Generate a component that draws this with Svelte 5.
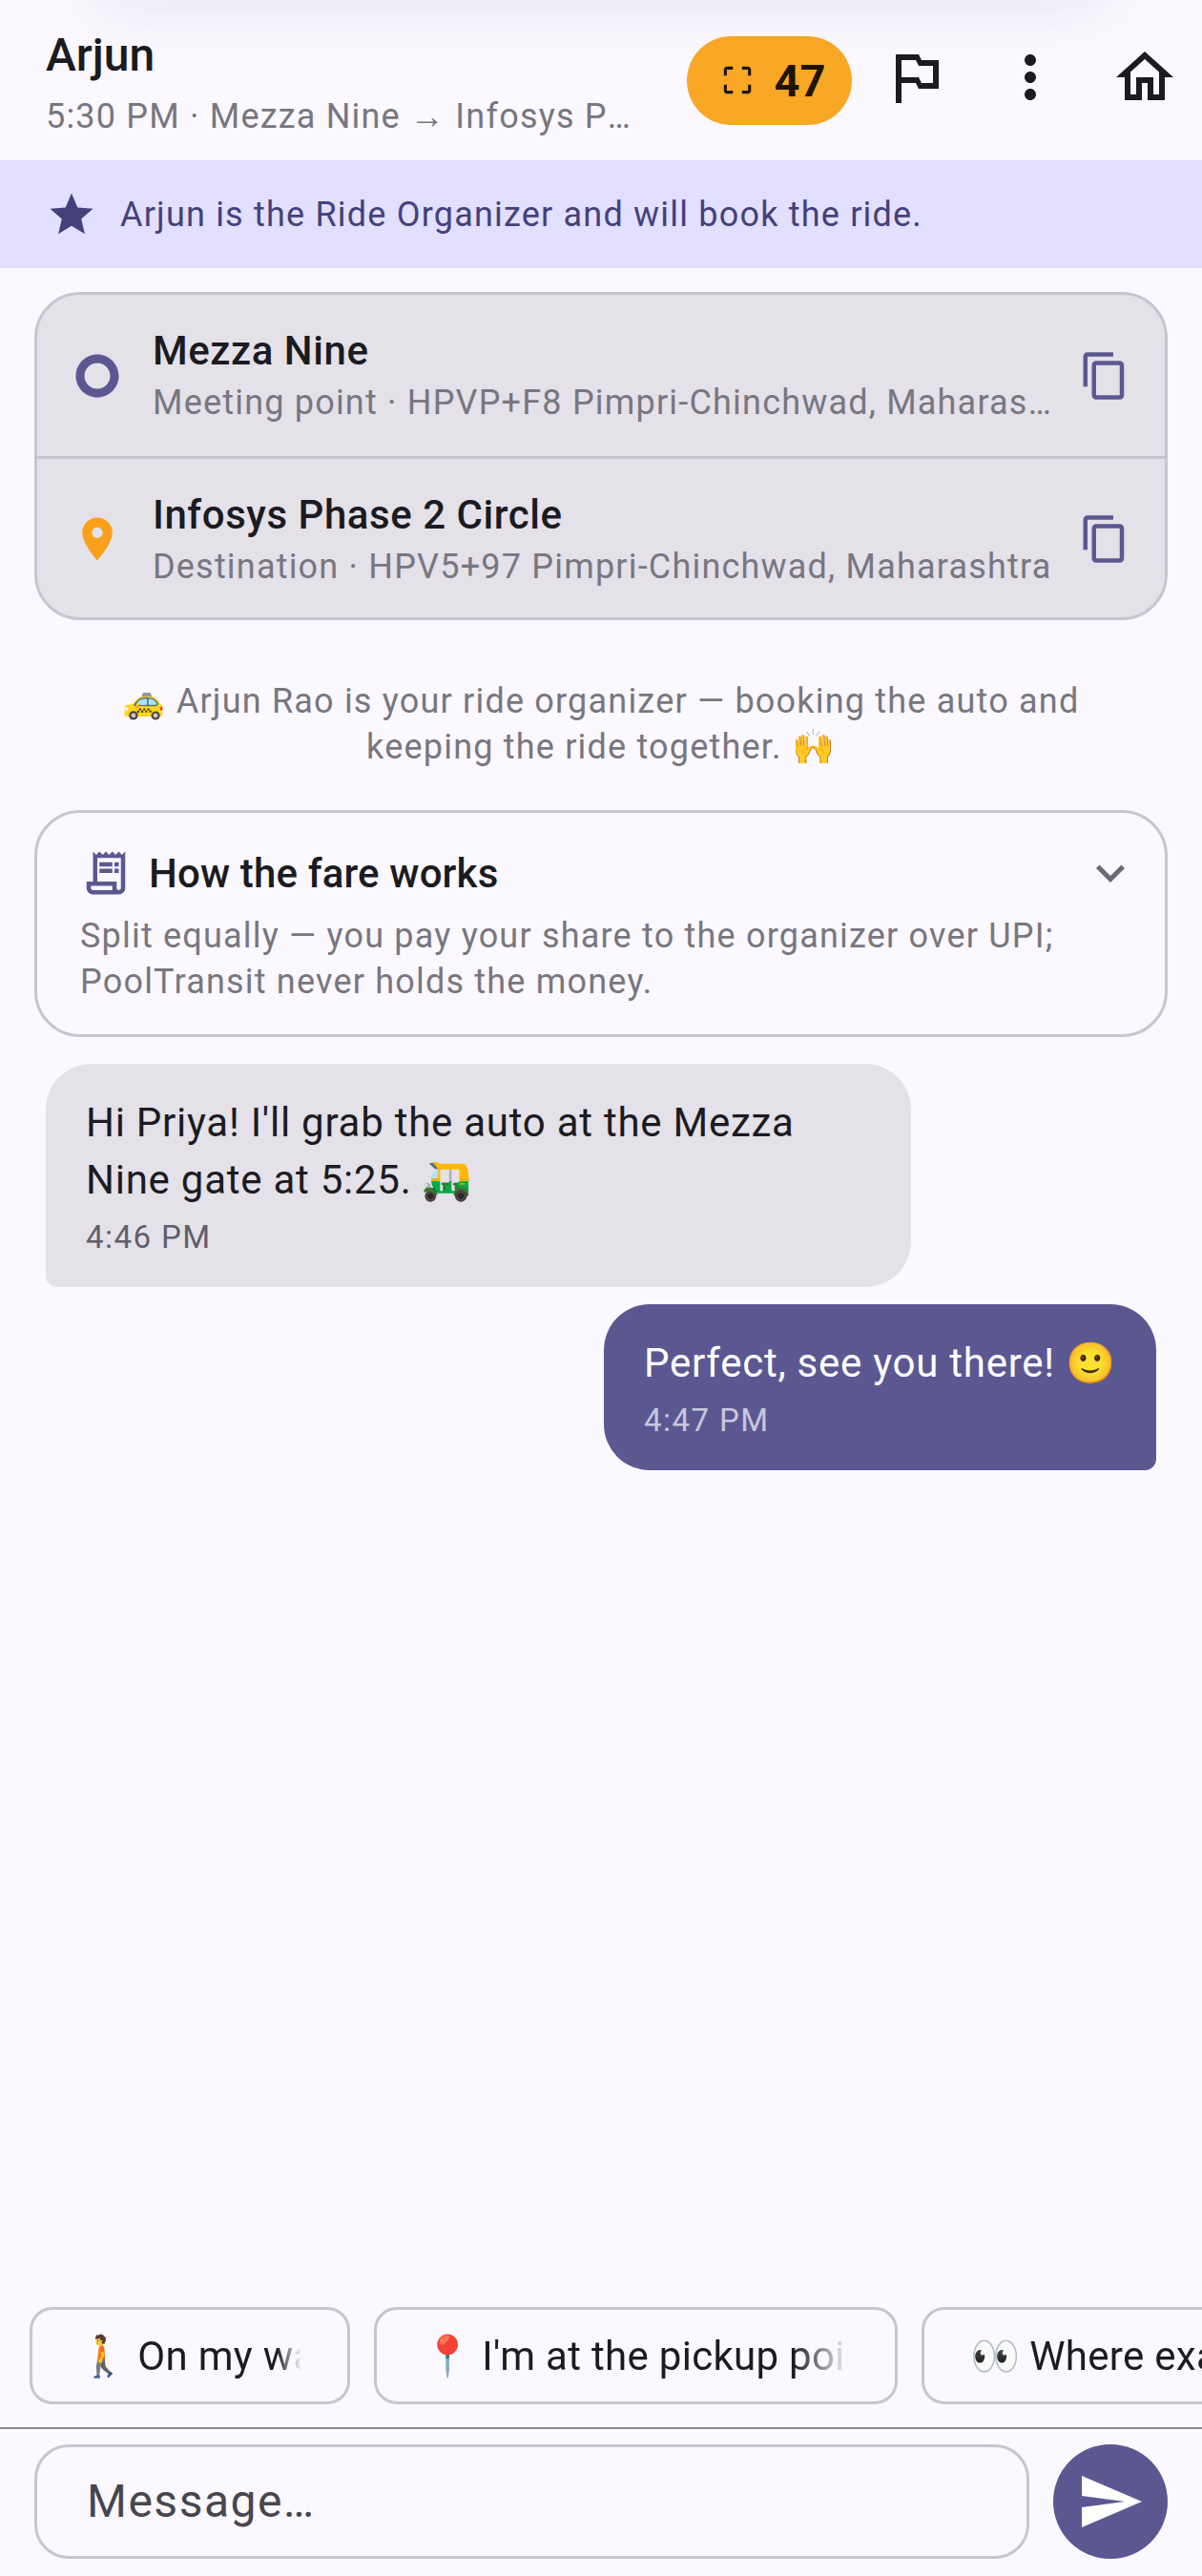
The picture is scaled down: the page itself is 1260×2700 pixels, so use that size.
<script>
	const icons = {
		crop: "M3 5v4h2V5h4V3H5c-1.1 0-2 .9-2 2zm2 10H3v4c0 1.1.9 2 2 2h4v-2H5v-4zm14 4h-4v2h4c1.1 0 2-.9 2-2v-4h-2v4zm0-16h-4v2h4v4h2V5c0-1.1-.9-2-2-2z",
		flag: "M14 6l-1-2H5v17h2v-7h5l1 2h7V6h-6zm4 8h-4l-1-2H7V6h5l1 2h5v6z",
		more: "M12 8c1.1 0 2-.9 2-2s-.9-2-2-2-2 .9-2 2 .9 2 2 2zm0 2c-1.1 0-2 .9-2 2s.9 2 2 2 2-.9 2-2-.9-2-2-2zm0 6c-1.1 0-2 .9-2 2s.9 2 2 2 2-.9 2-2-.9-2-2-2z",
		home: "M12 5.69l5 4.5V18h-2v-6H9v6H7v-7.81l5-4.5M12 3L2 12h3v8h6v-6h2v6h6v-8h3L12 3z",
		star: "M12 17.27L18.18 21l-1.64-7.03L22 9.24l-7.19-.61L12 2 9.19 8.63 2 9.24l5.46 4.73L5.82 21z",
		pin: "M12 2C8.13 2 5 5.13 5 9c0 5.25 7 13 7 13s7-7.75 7-13c0-3.87-3.13-7-7-7zm0 9.5c-1.38 0-2.5-1.12-2.5-2.5s1.12-2.5 2.5-2.5 2.5 1.12 2.5 2.5-1.12 2.5-2.5 2.5z",
		ring: "M12 2C6.48 2 2 6.48 2 12s4.48 10 10 10 10-4.48 10-10S17.52 2 12 2zm0 16c-3.31 0-6-2.69-6-6s2.69-6 6-6 6 2.69 6 6-2.69 6-6 6z",
		copy: "M16 1H4c-1.1 0-2 .9-2 2v14h2V3h12V1zm3 4H8c-1.1 0-2 .9-2 2v14c0 1.1.9 2 2 2h11c1.1 0 2-.9 2-2V7c0-1.1-.9-2-2-2zm0 16H8V7h11v14z",
		receipt: "M19.5 3.5L18 2l-1.5 1.5L15 2l-1.5 1.5L12 2l-1.5 1.5L9 2 7.5 3.5 6 2v14H3v3c0 1.66 1.34 3 3 3h12c1.66 0 3-1.34 3-3V2l-1.5 1.5zM15 20H6c-.55 0-1-.45-1-1v-1h10v2zm4-1c0 .55-.45 1-1 1s-1-.45-1-1v-3H8V5h11v14zM9 7h6v2H9zM16 7h2v2h-2zM9 10h6v2H9zM16 10h2v2h-2z",
		chevron: "M16.59 8.59L12 13.17 7.41 8.59 6 10l6 6 6-6z",
		send: "M2.01 21L23 12 2.01 3 2 10l15 2-15 2z",
	};

	const stops = [
		{ name: "Mezza Nine", detail: "Meeting point · HPVP+F8 Pimpri-Chinchwad, Maharashtra", icon: "ring", cls: "ring" },
		{ name: "Infosys Phase 2 Circle", detail: "Destination · HPV5+97 Pimpri-Chinchwad, Maharashtra", icon: "pin", cls: "pin" },
	];

	const chips = [
		{ emoji: "🚶", label: "On my way", width: 336 },
		{ emoji: "📍", label: "I'm at the pickup point", width: 549 },
		{ emoji: "👀", label: "Where exactly are you?", width: 560 },
	];
</script>

{#snippet icon(name, size, cls = "")}
	<svg class={cls} width={size} height={size} viewBox="0 0 24 24" fill="currentColor"><path d={icons[name]} /></svg>
{/snippet}

<div class="screen">
	<header>
		<div class="titles">
			<div class="name">Arjun</div>
			<div class="sub">5:30 PM · Mezza Nine → Infosys Phase 2 Circle</div>
		</div>
		<div class="badge">
			{@render icon("crop", 38)}
			<span>47</span>
		</div>
		<div class="action">{@render icon("flag", 72)}</div>
		<div class="action">{@render icon("more", 72)}</div>
		<div class="action">{@render icon("home", 72)}</div>
	</header>

	<div class="banner">
		{@render icon("star", 54)}
		<span>Arjun is the Ride Organizer and will book the ride.</span>
	</div>

	<section class="stops">
		{#each stops as stop}
			<div class="stop">
				{@render icon(stop.icon, 54, stop.cls)}
				<div class="stop-text">
					<div class="stop-name">{stop.name}</div>
					<div class="stop-detail">{stop.detail}</div>
				</div>
				{@render icon("copy", 54, "copy")}
			</div>
		{/each}
	</section>

	<p class="note">🚕 Arjun Rao is your ride organizer — booking the auto and keeping the ride together. 🙌</p>

	<section class="fare">
		<div class="fare-head">
			{@render icon("receipt", 54, "receipt")}
			<span class="fare-title">How the fare works</span>
			{@render icon("chevron", 60, "chevron")}
		</div>
		<p>Split equally — you pay your share to the organizer over UPI; PoolTransit never holds the money.</p>
	</section>

	<div class="thread">
		<div class="bubble theirs">
			<div class="msg">Hi Priya! I'll grab the auto at the Mezza Nine gate at 5:25. 🛺</div>
			<div class="time">4:46 PM</div>
		</div>
		<div class="bubble mine">
			<div class="msg">Perfect, see you there! 🙂</div>
			<div class="time">4:47 PM</div>
		</div>
	</div>

	<div class="chips">
		{#each chips as chip}
			<div class="chip" style="width: {chip.width}px">
				<span class="emoji">{chip.emoji}</span>
				<span class="chip-label">{chip.label}</span>
			</div>
		{/each}
	</div>

	<footer>
		<div class="input">Message…</div>
		<div class="send">{@render icon("send", 72)}</div>
	</footer>
</div>

<style>
	:global(body) {
		margin: 0;
		background: #fbf8ff;
	}
	.screen {
		width: 1260px;
		height: 2700px;
		display: flex;
		flex-direction: column;
		overflow: hidden;
		background: #fbf8ff;
		color: #1b1b21;
		font-family: Roboto, "Noto Color Emoji", sans-serif;
		font-size: 42px;
	}
	header {
		position: relative;
		height: 168px;
		flex: none;
		box-sizing: border-box;
		display: flex;
		align-items: center;
		padding: 0 0 6px 48px;
		overflow: hidden;
	}
	/* faint shadow falling from the status bar */
	header::before {
		content: "";
		position: absolute;
		top: -60px;
		left: 100px;
		right: 100px;
		height: 60px;
		box-shadow: 0 8px 60px rgba(70, 60, 130, 0.1);
	}
	.titles {
		flex: 1;
		min-width: 0;
		padding: 11px 54px 0 0;
	}
	.name {
		font-size: 48px;
		font-weight: 500;
		line-height: 60px;
	}
	.sub {
		margin-top: 10px;
		font-size: 36px;
		line-height: 48px;
		letter-spacing: 1.2px;
		color: #787680;
		white-space: nowrap;
		overflow: hidden;
		text-overflow: ellipsis;
	}
	.badge {
		flex: none;
		width: 173px;
		height: 93px;
		box-sizing: border-box;
		border-radius: 47px;
		background: #f9a825;
		color: #1f1400;
		display: flex;
		align-items: center;
		justify-content: center;
		gap: 20px;
		padding-left: 6px;
		font-size: 47px;
		font-weight: 700;
		margin: 6px 7px 0 0;
	}
	.action {
		flex: none;
		width: 120px;
		display: flex;
		justify-content: center;
	}
	.banner {
		height: 113px;
		flex: none;
		display: flex;
		align-items: center;
		gap: 24px;
		padding-left: 48px;
		background: #e2dfff;
		color: #44417a;
		font-size: 36px;
		letter-spacing: 1.2px;
	}
	.stops {
		margin: 25px 36px 0;
		border: 3px solid #c8c5d0;
		border-radius: 48px;
		background: #e4e1e9;
		overflow: hidden;
	}
	.stop {
		height: 169px;
		box-sizing: border-box;
		display: flex;
		align-items: center;
		padding: 0 36px;
		gap: 31px;
	}
	.stop + .stop {
		border-top: 3px solid #c8c5d0;
		padding-top: 2px;
	}
	.stop-text {
		flex: 1;
		min-width: 0;
		margin-right: -12px;
	}
	.stop-name {
		font-size: 42px;
		font-weight: 500;
		line-height: 54px;
		letter-spacing: 0.55px;
	}
	.stop-detail {
		margin-top: 3px;
		font-size: 36px;
		line-height: 48px;
		letter-spacing: 1.2px;
		color: #787680;
		white-space: nowrap;
		overflow: hidden;
		text-overflow: ellipsis;
	}
	.ring {
		color: #5b5891;
		flex: none;
	}
	.pin {
		color: #f9a01b;
		flex: none;
	}
	.copy {
		color: #5b5891;
		flex: none;
	}
	.note {
		margin: 61px 72px 0;
		text-align: center;
		font-size: 36px;
		line-height: 48px;
		letter-spacing: 1.2px;
		color: #787680;
	}
	.fare {
		margin: 42px 36px 0;
		border: 3px solid #c8c5d0;
		border-radius: 48px;
		padding: 36px 27px 31px 45px;
	}
	.fare-head {
		display: flex;
		align-items: center;
		gap: 18px;
		height: 54px;
	}
	.receipt {
		color: #5b5891;
		flex: none;
	}
	.chevron {
		color: #6b6974;
		margin-left: auto;
	}
	.fare-title {
		font-size: 42px;
		font-weight: 500;
		letter-spacing: 0.15px;
	}
	.fare p {
		margin: 15px 0 0;
		font-size: 36px;
		line-height: 48px;
		letter-spacing: 1.2px;
		color: #787680;
	}
	.thread {
		flex: 1;
		display: flex;
		flex-direction: column;
		padding: 28px 48px 0;
		gap: 18px;
	}
	.bubble {
		box-sizing: border-box;
		padding: 32px 42px 31px;
		font-size: 42px;
		line-height: 60px;
		letter-spacing: 0.75px;
	}
	.theirs {
		width: 907px;
		background: #e4e1e9;
		border-radius: 48px 48px 48px 12px;
	}
	.mine {
		width: 579px;
		align-self: flex-end;
		background: #5b5891;
		color: #fff;
		border-radius: 48px 48px 12px 48px;
	}
	.mine .msg {
		white-space: nowrap;
	}
	.time {
		font-size: 33px;
		line-height: 42px;
		letter-spacing: 1.45px;
		margin-top: 9px;
		color: #605e68;
	}
	.mine .time {
		color: #c9c7dd;
	}
	.chips {
		flex: none;
		display: flex;
		gap: 25px;
		padding-left: 31px;
		height: 126px;
	}
	.chip {
		flex: none;
		box-sizing: border-box;
		height: 102px;
		border: 3px solid #c8c5d0;
		border-radius: 24px;
		display: flex;
		align-items: center;
		padding: 0 48px;
		gap: 10px;
		overflow: hidden;
	}
	.chip-label {
		flex: 1;
		min-width: 0;
		white-space: nowrap;
		overflow: hidden;
		letter-spacing: 0.3px;
		-webkit-mask-image: linear-gradient(to right, #000 85%, transparent);
		mask-image: linear-gradient(to right, #000 85%, transparent);
	}
	footer {
		flex: none;
		height: 156px;
		box-sizing: border-box;
		border-top: 2px solid #8b8892;
		display: flex;
		align-items: flex-start;
		padding: 16px 36px 0;
		gap: 25px;
	}
	.input {
		flex: 1;
		height: 120px;
		box-sizing: border-box;
		border: 3px solid #c8c5d0;
		border-radius: 36px;
		padding: 0 52px 2px;
		display: flex;
		align-items: center;
		font-size: 48px;
		letter-spacing: 1.5px;
		color: #47464f;
	}
	.send {
		flex: none;
		width: 120px;
		height: 120px;
		border-radius: 50%;
		background: #5b5891;
		color: #fff;
		display: flex;
		align-items: center;
		justify-content: center;
	}
</style>
